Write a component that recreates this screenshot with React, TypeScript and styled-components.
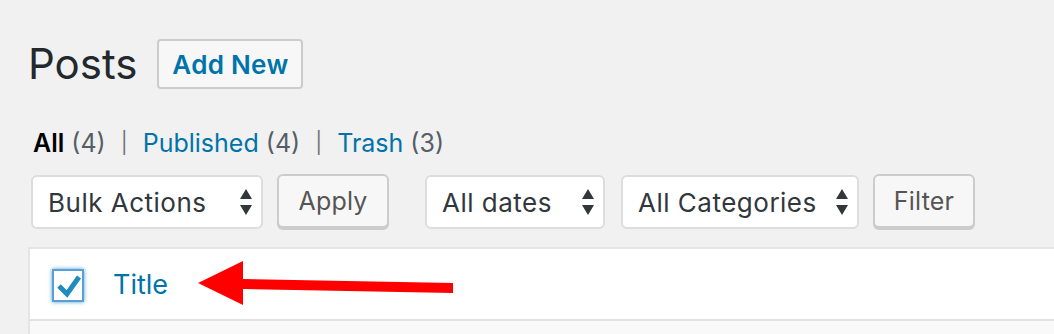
import React from 'react';
import styled, { createGlobalStyle } from 'styled-components';

const GlobalStyle = createGlobalStyle`
    body {
        margin: 0;
        background: #f1f1f1;
        font-family: Inter, "Liberation Sans", sans-serif;
        color: #23282d;
    }
`;

const Page = styled.div`
    position: relative;
    padding: 39px 0 0 28px;
    height: 295px;
    overflow: hidden;
`;

const Header = styled.div`
    display: flex;
    align-items: center;
    height: 50px;
`;

const Heading = styled.h1`
    margin: 0 20px 0 0;
    font-size: 42px;
    font-weight: 400;
    line-height: 50px;
    color: #23282d;
`;

const Button = styled.button<{ $primary?: boolean, $width: number }>`
    box-sizing: border-box;
    width: ${p => p.$width}px;
    height: ${p => p.$primary ? 50 : 54}px;
    padding: 0;
    border: 2px solid #ccc;
    border-radius: ${p => p.$primary ? 4 : 6}px;
    background: #f7f7f7;
    box-shadow: ${p => p.$primary ? 'none' : '0 2px 0 #ccc'};
    font-family: inherit;
    font-size: ${p => p.$primary ? 26 : 25}px;
    font-weight: ${p => p.$primary ? 600 : 400};
    letter-spacing: ${p => p.$primary ? 0.3 : 0.2}px;
    color: ${p => p.$primary ? '#0073aa' : '#555'};
`;

const SubNav = styled.ul`
    display: flex;
    height: 36px;
    margin: 36px 0 0 5px;
    padding: 0;
    list-style: none;
    font-size: 25px;
    line-height: 36px;
`;

const NavItem = styled.li<{ $current?: boolean }>`
    white-space: pre;
    a {
        color: ${p => p.$current ? '#000' : '#0073aa'};
        font-weight: ${p => p.$current ? 600 : 400};
        text-decoration: none;
    }
    .count {
        color: #555d66;
    }
`;

const Separator = styled.span`
    display: inline-block;
    vertical-align: top;
    margin: 0 15px;
    font-size: 21px;
    line-height: 36px;
    color: #72777c;
`;

const Toolbar = styled.div`
    display: flex;
    align-items: flex-start;
    margin: 13px 0 0 3px;
`;

const Group = styled.div<{ $gap: number }>`
    display: flex;
    gap: ${p => p.$gap}px;
    margin-right: 36px;
`;

const Select = styled.div<{ $width: number }>`
    box-sizing: border-box;
    display: flex;
    align-items: center;
    justify-content: space-between;
    width: ${p => p.$width}px;
    height: 54px;
    margin-top: 1px;
    padding: 0 8px 0 15px;
    border: 2px solid #ddd;
    border-radius: 6px;
    background: #fff;
    font-size: 26px;
    letter-spacing: 0.5px;
    color: #32373c;
`;

const Table = styled.div`
    margin-top: 18px;
    border-top: 2px solid #e5e5e5;
    border-left: 2px solid #e5e5e5;
    background: #fff;
`;

const HeadRow = styled.div`
    display: flex;
    align-items: center;
    height: 70px;
    padding-left: 22px;
    border-bottom: 2px solid #e1e1e1;
`;

const Checkbox = styled.span`
    box-sizing: border-box;
    display: inline-flex;
    width: 32px;
    height: 33px;
    margin: 3px 29px 0 0;
    border: 2px solid #5b9dd9;
    box-shadow: 0 0 4px rgba(30, 140, 190, 0.8);
    background: #fff;
`;

const ColumnLink = styled.a`
    font-size: 27px;
    color: #0073aa;
    text-decoration: none;
`;

const StripeRow = styled.div`
    height: 40px;
    background: #f9f9f9;
`;

const Arrow = styled.svg`
    position: absolute;
    left: 196px;
    top: 258px;
`;

const SortArrows = () => (
    <svg width="14" height="28" viewBox="0 0 14 28">
        <polygon points="7,1 13,11 1,11" fill="#32373c" />
        <polygon points="7,27 13,17 1,17" fill="#32373c" />
    </svg>
);

const links = [
    { label: 'All', count: 4, current: true },
    { label: 'Published', count: 4 },
    { label: 'Trash', count: 3 },
];

const App: React.FC = () => (
    <>
        <GlobalStyle />
        <Page>
            <Header>
                <Heading>Posts</Heading>
                <Button $primary $width={146}>Add New</Button>
            </Header>
            <SubNav>
                {links.map((l, i) => (
                    <NavItem key={l.label} $current={l.current}>
                        <a href="#">{l.label}</a> <span className="count">({l.count})</span>
                        {i < links.length - 1 && <Separator>|</Separator>}
                    </NavItem>
                ))}
            </SubNav>
            <Toolbar>
                <Group $gap={14}>
                    <Select $width={232}>Bulk Actions<SortArrows /></Select>
                    <Button $width={112}>Apply</Button>
                </Group>
                <Group $gap={16}>
                    <Select $width={180}>All dates<SortArrows /></Select>
                    <Select $width={238}>All Categories<SortArrows /></Select>
                </Group>
                <Button $width={102} style={{ marginLeft: -22 }}>Filter</Button>
            </Toolbar>
            <Table>
                <HeadRow>
                    <Checkbox>
                        <svg width="28" height="29" viewBox="0 0 28 29">
                            <polyline points="5,15 13,23 25,6" fill="none" stroke="#1e8cbe" strokeWidth="5" strokeLinejoin="miter" />
                        </svg>
                    </Checkbox>
                    <ColumnLink href="#">Title</ColumnLink>
                </HeadRow>
                <StripeRow />
            </Table>
            <Arrow width="260" height="50" viewBox="0 0 260 50">
                <polygon points="2,25 47,3 47,21 257,25 257,35 47,31 47,47" fill="#ff0000" />
            </Arrow>
        </Page>
    </>
);

export default App;
